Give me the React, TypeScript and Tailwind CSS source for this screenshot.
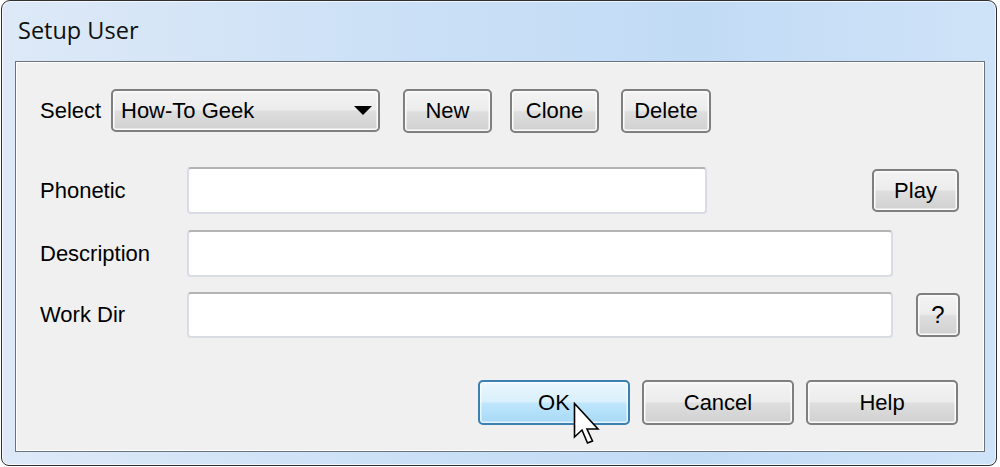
import React from "react";

const btn =
  "flex items-center justify-center rounded-[5px] border-2 border-[#7f7f7f] shadow-[inset_0_0_0_1.5px_#fbfbfb] bg-[linear-gradient(#f3f3f3_0%,#ececec_48%,#dedede_52%,#d0d0d0_100%)] text-[22px] leading-none text-black";

const input =
  "rounded-[4px] border-2 border-[#d9dde3] border-t-[#b4b4b4] bg-white";

function Button({ label, className }: { label: string; className: string }) {
  return <div className={`${btn} ${className}`}>{label}</div>;
}

export default function App() {
  return (
    <div className="relative w-[1000px] h-[467px] overflow-hidden bg-white font-['Liberation_Sans',Arial,sans-serif]">
      <div className="ml-[1px] flex h-[466px] w-[996px] flex-col rounded-t-[9px] rounded-b-[8px] border border-[#2f2f2f] bg-[linear-gradient(90deg,#dde9f7_0%,#c9dff6_45%,#c2dbf5_70%,#cfe3f8_100%)] shadow-[inset_0_0_0_1px_rgba(255,255,255,0.7)]">
        {/* Title bar */}
        <div className="flex h-[60px] items-center pl-[16px]">
          <span className="font-['Open_Sans',sans-serif] text-[23.5px] leading-none text-[#0f0f0f]">
            Setup User
          </span>
        </div>

        {/* Client area */}
        <div className="ml-[13px] flex h-[391px] w-[970px] flex-col border border-[#6b737c] bg-[#f0f0f0] pl-[24px] shadow-[inset_0_0_0_1px_#ffffff]">
          {/* Row 1 */}
          <div className="mt-[26px] flex h-[45px] items-center">
            <div className="w-[71px] text-[22px] leading-none text-black">Select</div>
            <div className={`${btn} h-[43px] w-[269px] !justify-between pl-[8px] pr-[6px]`}>
              <span>How-To Geek</span>
              <svg width="18" height="10" viewBox="0 0 18 10">
                <polygon points="0,0 18,0 9,9" fill="#000" />
              </svg>
            </div>
            <Button label="New" className="ml-[23px] h-[44px] w-[89px]" />
            <Button label="Clone" className="ml-[18px] h-[44px] w-[89px]" />
            <Button label="Delete" className="ml-[22px] h-[44px] w-[90px]" />
          </div>

          {/* Row 2 */}
          <div className="mt-[34px] flex h-[47px] items-center">
            <div className="w-[147px] text-[22px] leading-none text-black">Phonetic</div>
            <div className={`${input} h-[47px] w-[520px]`} />
            <Button label="Play" className="ml-[165px] h-[43px] w-[87px]" />
          </div>

          {/* Row 3 */}
          <div className="mt-[16px] flex h-[47px] items-center">
            <div className="w-[147px] text-[22px] leading-none text-black">Description</div>
            <div className={`${input} h-[47px] w-[706px]`} />
          </div>

          {/* Row 4 */}
          <div className="mt-[15px] flex h-[46px] items-center">
            <div className="w-[147px] text-[22px] leading-none text-black">Work Dir</div>
            <div className={`${input} h-[46px] w-[706px]`} />
            <Button label="?" className="ml-[23px] h-[44px] w-[44px] text-[24px]" />
          </div>

          {/* Row 5 */}
          <div className="ml-[438px] mt-[42px] flex h-[45px] gap-[12px]">
            <div className="flex h-[45px] w-[152px] items-center justify-center rounded-[5px] border-2 border-[#3c7fb1] bg-[linear-gradient(#eaf6fd_0%,#d9f0fc_48%,#bee6fd_52%,#a7d9f5_100%)] text-[22px] leading-none text-black shadow-[inset_0_0_0_1.5px_rgba(255,255,255,0.7)]">
              OK
            </div>
            <Button label="Cancel" className="h-[45px] w-[152px]" />
            <Button label="Help" className="h-[45px] w-[152px]" />
          </div>
        </div>
      </div>

      {/* Mouse cursor */}
      <svg
        className="absolute left-[573px] top-[402px]"
        width="27"
        height="43"
        viewBox="-1 -1 27 43"
      >
        <polygon
          points="0.5,0.5 0.5,34 8,27 13.5,40 18.5,38 13,26 24,26"
          fill="#ffffff"
          stroke="#000000"
          strokeWidth="1.6"
          strokeLinejoin="miter"
        />
      </svg>
    </div>
  );
}
